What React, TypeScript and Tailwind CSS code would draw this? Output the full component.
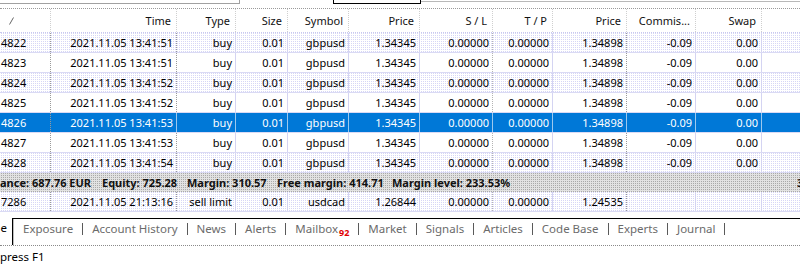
const FONT = "font-['Noto_Sans','Open_Sans',sans-serif]";

const GRID =
  'grid grid-cols-[51px_126px_59px_52px_61px_71px_73px_60px_74px_69px_66px_38px]';

// row separators: some columns carry a grey dotted rule, others a lavender solid one
const colLine = [
  'border-r border-dotted border-[#9a9a9a]',
  'border-r border-dotted border-[#9a9a9a]',
  'border-r border-[#d4d4f2]',
  'border-r border-[#d4d4f2]',
  'border-r border-[#d4d4f2]',
  'border-r border-[#d4d4f2]',
  'border-r border-dotted border-[#b4b4b4]',
  'border-r border-[#d4d4f2]',
  'border-r border-dotted border-[#9a9a9a]',
  'border-r border-[#d4d4f2]',
  'border-r border-[#d4d4f2]',
  '',
];

const headers = ['', 'Time', 'Type', 'Size', 'Symbol', 'Price', 'S / L', 'T / P', 'Price', 'Commis...', 'Swap', ''];

const rows = [
  ['4822', '2021.11.05 13:41:51'],
  ['4823', '2021.11.05 13:41:51'],
  ['4824', '2021.11.05 13:41:52'],
  ['4825', '2021.11.05 13:41:52'],
  ['4826', '2021.11.05 13:41:53'],
  ['4827', '2021.11.05 13:41:53'],
  ['4828', '2021.11.05 13:41:54'],
].map(([id, t]) => [id, t, 'buy', '0.01', 'gbpusd', '1.34345', '0.00000', '0.00000', '1.34898', '-0.09', '0.00', '']);

const pending = ['7286', '2021.11.05 21:13:16', 'sell limit', '0.01', 'usdcad', '1.26844', '0.00000', '0.00000', '1.24535', '', '', ''];

const DOTS = 'bg-white bg-[image:conic-gradient(#d6d6f6_25%,transparent_0)] bg-[length:2px_2px]';

const tabs = ['Exposure', 'Account History', 'News', 'Alerts', 'Mailbox', 'Market', 'Signals', 'Articles', 'Code Base', 'Experts', 'Journal'];

function Row({ cells, mode }: { cells: string[]; mode: 'dots' | 'plain' | 'selected' }) {
  const bg =
    mode === 'selected' ? 'bg-[#0078d7] text-white' : mode === 'dots' ? DOTS : 'bg-white';
  return (
    <div className={`${GRID} h-[20px] border-b border-[#dadaf4] ${bg}`}>
      {cells.map((c, i) => (
        <div
          key={i}
          className={`flex items-center overflow-hidden whitespace-nowrap ${
            mode === 'selected' && i > 0 && i < 11 ? 'border-r border-[#9cc8ee]' : colLine[i]
          } ${i === 0 ? 'justify-start pl-[1px]' : 'justify-end pr-[3px]'}`}
        >
          {c}
        </div>
      ))}
    </div>
  );
}

export default function App() {
  return (
    <div className={`${FONT} flex h-[267px] w-[800px] flex-col overflow-hidden bg-white text-[11px] leading-none text-black`}>
      {/* toolbar remnants */}
      <div className="flex h-[9px] shrink-0 items-start border-b border-dotted border-[#9a9a9a]">
        <div className="h-[4px] w-[240px] border-b border-r border-[#a0a0a0]" />
        <div className="w-[93px]" />
        <div className="h-[4px] w-[88px] border-x border-b border-black" />
        <div className="h-[2px] flex-1 border-b border-[#b8b8b8]" />
      </div>

      {/* header */}
      <div className={`${GRID} h-[24px] shrink-0 border-b border-dotted border-[#c8c8ee] bg-white text-[#111]`}>
        {headers.map((h, i) => (
          <div
            key={i}
            className={`flex items-center whitespace-nowrap ${
              i < 11 ? 'border-r border-dotted border-[#cfcfcf]' : ''
            } ${i === 0 ? 'justify-start pl-[9px]' : 'justify-end pr-[5px]'}`}
          >
            {i === 0 ? (
              <svg width="5" height="8" viewBox="0 0 5 8" className="mt-[1px]">
                <path d="M4.5 0.5 0.5 7.5" stroke="#666" strokeWidth="1" />
              </svg>
            ) : (
              h
            )}
          </div>
        ))}
      </div>

      {/* positions */}
      {rows.map((r, i) => (
        <Row key={r[0]} cells={r} mode={i === 4 ? 'selected' : i % 2 === 0 ? 'dots' : 'plain'} />
      ))}

      {/* account summary */}
      <div className="flex h-[19px] shrink-0 items-center whitespace-nowrap bg-[#e2e2e2] bg-[image:conic-gradient(#a9a9a9_25%,transparent_0)] bg-[length:2px_2px] font-bold text-[#111]">
        <span className="w-[102px]">ance: 687.76 EUR</span>
        <span className="w-[85px]">Equity: 725.28</span>
        <span className="w-[90px]">Margin: 310.57</span>
        <span className="w-[115px]">Free margin: 414.71</span>
        <span className="w-[405px]">Margin level: 233.53%</span>
        <span className="w-[3px] overflow-hidden">3</span>
      </div>

      {/* pending order */}
      <Row cells={pending} mode="dots" />

      <div className="h-[6px] shrink-0" />

      {/* bottom tabs */}
      <div className="flex h-[28px] shrink-0 border-b border-dotted border-[#8a8a8a]">
        <div className="flex h-full w-[13px] justify-end border-r border-black pr-[5px] pt-[4px] shadow-[1px_0_0_#bdbdbd]">
          <span className="leading-[12px] text-[11.5px]">e</span>
        </div>
        <div className="flex flex-1 items-start gap-[9px] border-t border-black pl-[10px] text-[11.5px] text-[#6b6b6b]">
          {tabs.map((t) => (
            <div key={t} className="flex h-[19px] items-center gap-[9px] whitespace-nowrap">
              <span className="flex items-center">
                {t}
                {t === 'Mailbox' && (
                  <span className="relative top-[4px] ml-[1px] text-[9px] font-bold text-[#e00000]">92</span>
                )}
              </span>
              <span className="h-[12px] w-px bg-[#5a5a5a]" />
            </div>
          ))}
        </div>
      </div>

      {/* status line */}
      <div className="flex flex-1 items-center text-[11.5px]">press F1</div>
    </div>
  );
}
